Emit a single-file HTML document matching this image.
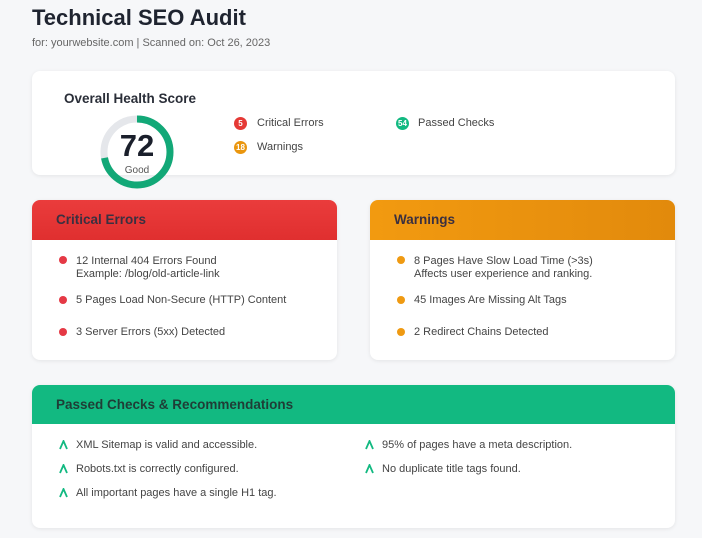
<!DOCTYPE html>
<html><head><meta charset="utf-8"><style>
*{box-sizing:border-box;margin:0;padding:0}
body{width:702px;height:538px;background:#f6f7f9;font-family:"Liberation Sans",sans-serif;color:#333;position:relative;overflow:hidden}
.a{position:absolute}
h1{position:absolute;left:32px;top:5px;font-size:22px;font-weight:bold;color:#1f2430}
.sub{left:32px;top:37px;font-size:11px;color:#666}
.card{position:absolute;background:#fff;border-radius:8px;box-shadow:0 1px 4px rgba(0,0,0,.08);overflow:hidden}
.hd{height:40px;padding-left:24px;line-height:40px;font-size:13.5px;font-weight:bold;color:#3b3040}
.it{position:absolute;font-size:11px;color:#444;line-height:13px}
.dot{position:absolute;width:8px;height:8px;border-radius:50%}
.badge{position:absolute;width:13px;height:13px;border-radius:50%;color:#fff;font-size:8px;font-weight:bold;text-align:center;line-height:13px}
.chk{position:absolute}
</style></head><body>
<h1>Technical SEO Audit</h1>
<div class="a sub">for: yourwebsite.com | Scanned on: Oct 26, 2023</div>

<div class="card" style="left:32px;top:71px;width:643px;height:104px"></div>
<div class="a" style="left:64px;top:91px;font-size:13.5px;font-weight:bold;color:#2a2e38">Overall Health Score</div>
<svg class="a" style="left:99px;top:114px" width="76" height="76"><circle cx="38" cy="38" r="33" fill="none" stroke="#e5e7eb" stroke-width="7"/><circle cx="38" cy="38" r="33" fill="none" stroke="#12a877" stroke-width="7" stroke-dasharray="149.3 207.3" transform="rotate(-90 38 38)"/></svg>
<div class="a" style="left:99px;top:129px;width:76px;text-align:center;font-size:31px;font-weight:bold;color:#1a1f2b;line-height:34px">72</div>
<div class="a" style="left:99px;top:165px;width:76px;text-align:center;font-size:10px;color:#555">Good</div>
<div class="badge" style="left:234px;top:117px;background:#e53935">5</div>
<div class="it" style="left:257px;top:117px">Critical Errors</div>
<div class="badge" style="left:234px;top:141px;background:#ea960e">18</div>
<div class="it" style="left:257px;top:141px">Warnings</div>
<div class="badge" style="left:396px;top:117px;background:#12b981">54</div>
<div class="it" style="left:418px;top:117px">Passed Checks</div>

<div class="card" style="left:32px;top:200px;width:305px;height:160px"><div class="hd" style="background:linear-gradient(#ea3c3c,#e02f2f)">Critical Errors</div></div>
<div class="dot" style="left:59px;top:256px;background:#e53945"></div>
<div class="it" style="left:76px;top:255px">12 Internal 404 Errors Found<br>Example: /blog/old-article-link</div>
<div class="dot" style="left:59px;top:296px;background:#e53945"></div>
<div class="it" style="left:76px;top:294px">5 Pages Load Non-Secure (HTTP) Content</div>
<div class="dot" style="left:59px;top:328px;background:#e53945"></div>
<div class="it" style="left:76px;top:326px">3 Server Errors (5xx) Detected</div>

<div class="card" style="left:370px;top:200px;width:305px;height:160px"><div class="hd" style="background:linear-gradient(90deg,#f29a10,#e28a0c)">Warnings</div></div>
<div class="dot" style="left:397px;top:256px;background:#ef9a12"></div>
<div class="it" style="left:414px;top:255px">8 Pages Have Slow Load Time (&gt;3s)<br>Affects user experience and ranking.</div>
<div class="dot" style="left:397px;top:296px;background:#ef9a12"></div>
<div class="it" style="left:414px;top:294px">45 Images Are Missing Alt Tags</div>
<div class="dot" style="left:397px;top:328px;background:#ef9a12"></div>
<div class="it" style="left:414px;top:326px">2 Redirect Chains Detected</div>

<div class="card" style="left:32px;top:385px;width:643px;height:143px"><div class="hd" style="height:39px;line-height:39px;background:#12b981;color:#1f3d36">Passed Checks &amp; Recommendations</div></div>
<svg class="chk" style="left:59px;top:440px" width="9" height="10"><path d="M1 9L4.5 1L8 9" fill="none" stroke="#12b981" stroke-width="1.8"/></svg><div class="it" style="left:76px;top:439px">XML Sitemap is valid and accessible.</div>
<svg class="chk" style="left:59px;top:464px" width="9" height="10"><path d="M1 9L4.5 1L8 9" fill="none" stroke="#12b981" stroke-width="1.8"/></svg><div class="it" style="left:76px;top:463px">Robots.txt is correctly configured.</div>
<svg class="chk" style="left:59px;top:488px" width="9" height="10"><path d="M1 9L4.5 1L8 9" fill="none" stroke="#12b981" stroke-width="1.8"/></svg><div class="it" style="left:76px;top:487px">All important pages have a single H1 tag.</div>
<svg class="chk" style="left:365px;top:440px" width="9" height="10"><path d="M1 9L4.5 1L8 9" fill="none" stroke="#12b981" stroke-width="1.8"/></svg><div class="it" style="left:382px;top:439px">95% of pages have a meta description.</div>
<svg class="chk" style="left:365px;top:464px" width="9" height="10"><path d="M1 9L4.5 1L8 9" fill="none" stroke="#12b981" stroke-width="1.8"/></svg><div class="it" style="left:382px;top:463px">No duplicate title tags found.</div>
</body></html>
